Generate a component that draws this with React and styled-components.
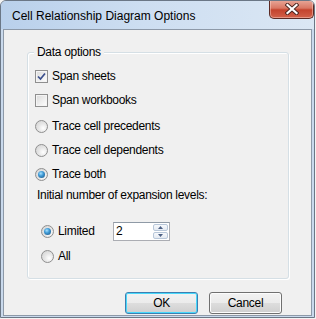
import styled, { createGlobalStyle } from 'styled-components';

const Global = createGlobalStyle`
  html, body {
    margin: 0;
    padding: 0;
    background: #f3f3f3;
  }
  body {
    font-family: "Liberation Sans", Arial, sans-serif;
    font-size: 12px;
    color: #000;
  }
`;

const Window = styled.div`
  width: 315px;
  height: 318px;
  box-sizing: border-box;
  border: 1px solid #6b7786;
  border-radius: 6px 6px 0 0;
  background: #c9d9ec;
  display: flex;
  flex-direction: column;
  padding: 0 2px 1px;
  overflow: hidden;
`;

const TitleBar = styled.div`
  height: 28px;
  flex: none;
  display: flex;
  align-items: flex-start;
  justify-content: space-between;
  margin: 0 -2px;
  background: linear-gradient(90deg, #b9d0eb 0%, #cddef1 45%, #dbe7f4 100%);
`;

const Title = styled.span`
  padding: 8px 0 0 11px;
  font-size: 12px;
  line-height: 14px;
  color: #000;
`;

const CloseButton = styled.div`
  width: 45px;
  height: 19px;
  box-sizing: border-box;
  margin-top: -1px;
  border: 1px solid #5b2a24;
  border-top: none;
  border-radius: 0 0 5px 5px;
  background: linear-gradient(180deg, #e9a99a 0%, #d97764 45%, #c4432d 55%, #d2614a 100%);
  box-shadow: inset 0 0 0 1px rgba(255, 220, 210, 0.45);
  display: flex;
  align-items: center;
  justify-content: center;
`;

const Client = styled.div`
  flex: 1;
  border: 1px solid #8d99a8;
  background: #f0f0f0;
  display: flex;
  flex-direction: column;
  padding: 22px 0 0 23px;
  letter-spacing: -0.3px;
`;

const GroupBox = styled.div`
  position: relative;
  width: 262px;
  height: 227px;
  box-sizing: border-box;
  border: 1px solid #d5dfe5;
  border-radius: 3px;
  box-shadow: 1px 1px 0 #fff, inset 1px 1px 0 #fff;
  padding: 11px 0 0 7px;
  display: flex;
  flex-direction: column;
`;

const Legend = styled.span`
  position: absolute;
  top: -8px;
  left: 6px;
  padding: 0 3px;
  background: #f0f0f0;
  line-height: 14px;
`;

const Row = styled.div`
  height: 24px;
  display: flex;
  align-items: center;
  gap: 4px;
  margin-top: ${p => p.$gap || 0}px;
  margin-left: ${p => p.$indent || 0}px;
`;

const Caption = styled.div`
  line-height: 16px;
  margin-top: ${p => p.$gap || 0}px;
  margin-left: 2px;
`;

const CheckBox = styled.span`
  width: 13px;
  height: 13px;
  box-sizing: border-box;
  border: 1px solid #8f8f8f;
  background: linear-gradient(135deg, #d9d9d9 0%, #f0f0f0 60%, #fff 100%);
  box-shadow: inset 0 0 0 1px #f4f4f4;
  display: flex;
  align-items: center;
  justify-content: center;
  flex: none;
`;

const Radio = styled.span`
  width: 13px;
  height: 13px;
  box-sizing: border-box;
  border-radius: 50%;
  border: 1px solid #8f8f8f;
  background: radial-gradient(circle at 65% 65%, #fff 0%, #e6e6e6 45%, #cfcfcf 100%);
  display: flex;
  align-items: center;
  justify-content: center;
  flex: none;
`;

const Dot = styled.span`
  width: 7px;
  height: 7px;
  border-radius: 50%;
  background: radial-gradient(circle at 40% 35%, #a8e2ff 0%, #3f9ad6 40%, #1b4f7a 100%);
`;

const LevelText = styled.span`
  width: 51px;
`;

const Spin = styled.div`
  width: 57px;
  height: 19px;
  box-sizing: border-box;
  border: 1px solid #abadb3;
  border-top-color: #8f9aa6;
  background: #fff;
  display: flex;
`;

const SpinValue = styled.span`
  flex: 1;
  padding: 1px 0 0 2px;
  line-height: 14px;
`;

const SpinButtons = styled.div`
  width: 15px;
  display: flex;
  flex-direction: column;
  padding: 1px 1px 1px 0;
  gap: 1px;
`;

const SpinButton = styled.span`
  flex: 1;
  border: 1px solid #b8c7d9;
  border-radius: 2px;
  background: linear-gradient(180deg, #f7f9fc 0%, #e4eaf2 100%);
  display: flex;
  align-items: center;
  justify-content: center;
`;

const ButtonRow = styled.div`
  display: flex;
  justify-content: flex-end;
  gap: 11px;
  margin-top: 13px;
  padding-right: 29px;
`;

const Button = styled.div`
  width: 73px;
  height: 22px;
  box-sizing: border-box;
  border: 1px solid ${p => (p.$default ? '#3c7fb1' : '#707070')};
  border-radius: 3px;
  background: linear-gradient(180deg, #f2f2f2 0%, #ebebeb 49%, #dddddd 51%, #cfcfcf 100%);
  box-shadow: inset 0 0 0 1px ${p => (p.$default ? '#48d8fb' : '#fcfcfc')};
  display: flex;
  align-items: center;
  justify-content: center;
  line-height: 14px;
`;

const Check = () => (
  <svg width="9" height="9" viewBox="0 0 9 9">
    <path d="M1 4.5 L3.5 7 L8 1.5" fill="none" stroke="#3b4f8c" strokeWidth="1.7" />
  </svg>
);

const Arrow = ({ up }) => (
  <svg width="5" height="3" viewBox="0 0 5 3">
    <path d={up ? 'M0 3 L2.5 0 L5 3 Z' : 'M0 0 L2.5 3 L5 0 Z'} fill="#4d6185" />
  </svg>
);

const CloseGlyph = () => (
  <svg width="14" height="12" viewBox="0 0 14 12">
    <path d="M2.5 2 L11.5 10 M11.5 2 L2.5 10" stroke="#4a2520" strokeWidth="4" strokeLinecap="square" />
    <path d="M2.5 2 L11.5 10 M11.5 2 L2.5 10" stroke="#fff" strokeWidth="2.2" strokeLinecap="square" />
  </svg>
);

const options = [
  { label: 'Trace cell precedents', gap: 2 },
  { label: 'Trace cell dependents', gap: 0 },
  { label: 'Trace both', gap: 0, on: true },
];

export default function App() {
  return (
    <>
      <Global />
      <Window>
        <TitleBar>
          <Title>Cell Relationship Diagram Options</Title>
          <CloseButton>
            <CloseGlyph />
          </CloseButton>
        </TitleBar>
        <Client>
          <GroupBox>
            <Legend>Data options</Legend>
            <Row>
              <CheckBox>
                <Check />
              </CheckBox>
              Span sheets
            </Row>
            <Row>
              <CheckBox />
              Span workbooks
            </Row>
            {options.map(o => (
              <Row key={o.label} $gap={o.gap}>
                <Radio>{o.on && <Dot />}</Radio>
                {o.label}
              </Row>
            ))}
            <Caption $gap={1}>Initial number of expansion levels:</Caption>
            <Row $gap={16} $indent={6}>
              <Radio>
                <Dot />
              </Radio>
              <LevelText>Limited</LevelText>
              <Spin>
                <SpinValue>2</SpinValue>
                <SpinButtons>
                  <SpinButton>
                    <Arrow up />
                  </SpinButton>
                  <SpinButton>
                    <Arrow />
                  </SpinButton>
                </SpinButtons>
              </Spin>
            </Row>
            <Row $gap={1} $indent={6}>
              <Radio />
              All
            </Row>
          </GroupBox>
          <ButtonRow>
            <Button $default>OK</Button>
            <Button>Cancel</Button>
          </ButtonRow>
        </Client>
      </Window>
    </>
  );
}
